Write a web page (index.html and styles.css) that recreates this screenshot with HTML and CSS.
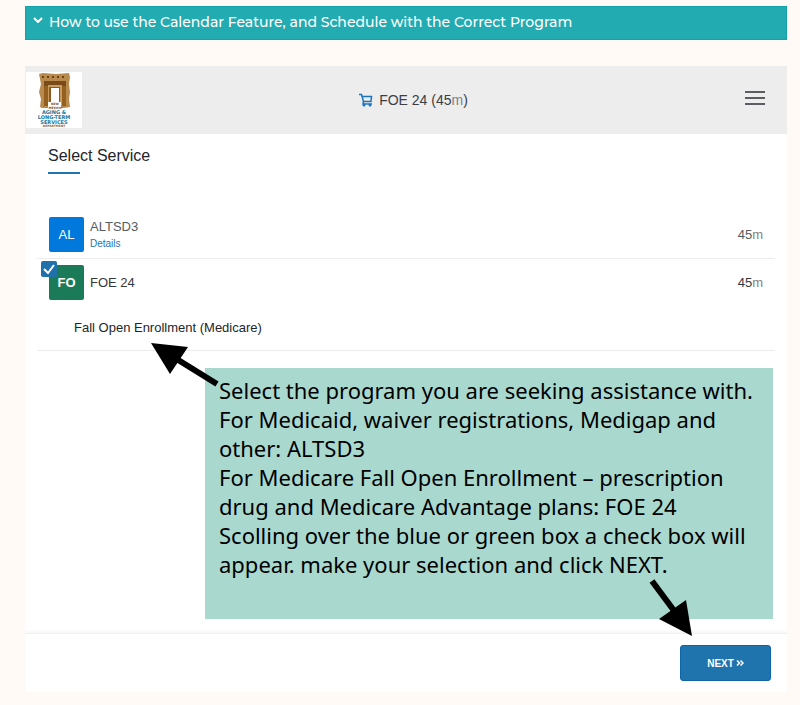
FILE: index.html
```html
<!DOCTYPE html>
<html lang="en">
<head>
    <meta charset="utf-8">
    <title>Select Service</title>
    <link rel="stylesheet" href="styles.css">
</head>
<body>
    <button class="accordion" type="button">
        <svg class="chevron" viewBox="0 0 10 6" aria-hidden="true"><path d="M1 1l4 4 4-4"/></svg>
        How to use the Calendar Feature, and Schedule with the Correct Program
    </button>

    <div class="booking">
        <header class="booking-header">
            <svg class="logo" viewBox="0 0 56 56" role="img" aria-label="New Mexico Aging and Long-Term Services Department">
                <rect width="56" height="56" fill="#fff"/>
                <path d="M13 2L17 1L30 2L43 1L44 5L43 12L44 20L43 27L44 35L38 36H16L14 35L15 27L13 20L15 12Z" fill="#b98a4e"/>
                <path d="M16 5H41" stroke="#6b4015" stroke-width="2" stroke-dasharray="2 3"/>
                <path d="M18 9H40V14H18Z" fill="#7a4a18"/>
                <path d="M18 14H22V34H18ZM36 14H40V34H36Z" fill="#94601f"/>
                <path d="M22 13H36V34H22Z" fill="#c99c62"/>
                <path d="M23 15H34V34H23Z" fill="#8c5a20"/>
                <path d="M25 16H33V34H25Z" fill="#fff"/>
                <path d="M22 30H35V37H22Z" fill="#fff"/>
                <text class="logo-state" x="29" y="33">NEW</text>
                <text class="logo-state" x="29" y="37">MEXICO</text>
                <text class="logo-name" x="28" y="42">AGING &amp;</text>
                <text class="logo-name" x="28" y="47">LONG-TERM</text>
                <text class="logo-name" x="28" y="52">SERVICES</text>
                <text class="logo-dept" x="28" y="55">DEPARTMENT</text>
            </svg>
            <div class="cart">
                <svg class="cart-icon" viewBox="0 0 14 14" aria-hidden="true">
                    <path d="M0 1.5h2.5L4.5 8.5h7.5L12.5 3.5H3"/>
                    <path d="M4.5 8.5L4 11h9"/>
                    <circle cx="5" cy="12.2" r="1"/>
                    <circle cx="11" cy="12.2" r="1"/>
                </svg>
                <span>FOE 24 (45<span class="unit">m</span>)</span>
            </div>
            <button class="menu" type="button" aria-label="Menu">
                <span></span><span></span><span></span>
            </button>
        </header>

        <main class="booking-body">
            <h1 class="title">Select Service</h1>

            <ul class="services">
                <li class="service">
                    <div class="service-row">
                        <span class="tile tile-blue">AL</span>
                        <div class="service-info">
                            <span class="service-name">ALTSD3</span>
                            <a class="details" href="#">Details</a>
                        </div>
                        <span class="duration">45<span class="unit">m</span></span>
                    </div>
                </li>
                <li class="service selected">
                    <div class="service-row">
                        <span class="tile tile-green">FO
                            <input class="check" type="checkbox" id="foe24" checked>
                        </span>
                        <label class="service-info service-name" for="foe24">FOE 24</label>
                        <span class="duration">45<span class="unit">m</span></span>
                    </div>
                    <p class="description">Fall Open Enrollment (Medicare)</p>
                </li>
            </ul>

            <div class="callout">
                <p>Select the program you are seeking assistance with.<br>
                For Medicaid, waiver registrations, Medigap and<br>
                other: ALTSD3<br>
                For Medicare Fall Open Enrollment – prescription<br>
                drug and Medicare Advantage plans: FOE 24<br>
                Scolling over the blue or green box a check box will<br>
                appear. make your selection and click NEXT.</p>
                <svg class="arrow arrow-service" viewBox="0 0 70 46" aria-hidden="true">
                    <path d="M24 15L66 41" stroke="#000" stroke-width="6"/>
                    <path d="M0 0L37 4L19 31Z"/>
                </svg>
                <svg class="arrow arrow-next" viewBox="0 0 44 58" aria-hidden="true">
                    <path d="M3 2L26 33" stroke="#000" stroke-width="6"/>
                    <path d="M43 57L37 21L10 40Z"/>
                </svg>
            </div>
        </main>

        <footer class="booking-footer">
            <button class="next" type="button">NEXT
                <svg class="next-icon" viewBox="0 0 8 6" aria-hidden="true"><path d="M1 0.5L3.5 3L1 5.5M4.5 0.5L7 3L4.5 5.5"/></svg>
            </button>
        </footer>
    </div>
</body>
</html>
```
FILE: styles.css
```css
* {
    box-sizing: border-box;
}
body {
    margin: 0;
    padding: 6px 13px 13px 25px;
    background-color: #fffaf6;
    color: #22262a;
    font-family: "Liberation Sans", Arial, sans-serif;
    font-size: 14px;
}
button {
    font-family: inherit;
    cursor: pointer;
}

/* accordion bar */
.accordion {
    display: flex;
    align-items: center;
    gap: 6px;
    width: 100%;
    height: 34px;
    padding: 0 7px 2px;
    background-color: #22abb1;
    border: 1px solid #12a3a9;
    color: white;
    font-family: Montserrat, Inter, sans-serif;
    font-size: 14px;
    font-weight: 500;
    text-align: left;
}
.chevron {
    width: 10px;
    height: 6px;
    margin-bottom: 4px;
    fill: none;
    stroke: white;
    stroke-width: 2;
}

/* booking widget */
.booking {
    margin-top: 26px;
    background-color: white;
}
.booking-header {
    display: flex;
    align-items: center;
    justify-content: space-between;
    height: 68px;
    padding: 0 22px 0 1px;
    background-color: #ededed;
}
.logo {
    width: 56px;
    height: 56px;
}
.logo text {
    font-family: "DejaVu Sans", sans-serif;
    font-weight: bold;
    text-anchor: middle;
}
.logo-state {
    font-size: 3px;
    fill: #7a4a18;
}
.logo-name {
    font-size: 5px;
    fill: #16789a;
}
.logo-dept {
    font-size: 3px;
    fill: #94601f;
}
.cart {
    display: flex;
    align-items: center;
    gap: 6px;
    color: #3a3f45;
}
.cart-icon {
    width: 14px;
    height: 14px;
    fill: #1b75bc;
    stroke: #1b75bc;
}
.cart-icon path {
    fill: none;
    stroke-width: 1.5;
}
.unit {
    color: #7d8287;
    font-weight: normal;
}
.menu {
    display: flex;
    flex-direction: column;
    gap: 4px;
    width: 20px;
    padding: 0 0 4px;
    background: none;
    border: none;
}
.menu span {
    height: 2px;
    background-color: #5a5d61;
}

.booking-body {
    padding: 12px 12px 14px;
}
.title {
    margin: 0 0 37px 11px;
    font-size: 16px;
    font-weight: normal;
    line-height: 20px;
}
.title::after {
    content: "";
    display: block;
    width: 32px;
    height: 2px;
    margin-top: 6px;
    background-color: #1f75b0;
}
.services {
    margin: 0;
    padding: 0;
    list-style: none;
}
.service {
    padding: 6px 12px;
    border-bottom: 1px solid #ececec;
}
.service-row {
    display: flex;
    align-items: center;
    gap: 6px;
}
.tile {
    display: flex;
    align-items: center;
    justify-content: center;
    position: relative;
    width: 35px;
    height: 35px;
    border-radius: 2px;
    color: white;
    font-size: 13px;
}
.tile-blue {
    background-color: #0078dc;
}
.tile-green {
    background-color: #1b7a57;
    font-weight: bold;
}
.service-info {
    flex: 1;
}
.service-name {
    display: block;
    color: #555b61;
    font-size: 13px;
}
.details {
    display: block;
    margin-top: 4px;
    color: #1f75b0;
    font-size: 10px;
    line-height: 12px;
    text-decoration: none;
}
.duration {
    color: #555b61;
    font-size: 13px;
}
.selected .service-name,
.selected .duration {
    color: #33383e;
}
.check {
    position: absolute;
    top: -4px;
    left: -8px;
    width: 16px;
    height: 16px;
    margin: 0;
    appearance: none;
    border-radius: 2px;
    background: #1f70ab url("data:image/svg+xml,%3Csvg xmlns='http://www.w3.org/2000/svg' viewBox='0 0 16 16'%3E%3Cpath d='M3 8l4 4 6-8' fill='none' stroke='white' stroke-width='2'/%3E%3C/svg%3E");
}
.description {
    margin: 19px 25px 7px;
    font-size: 13px;
    line-height: 18px;
}

/* instructions over the widget */
.callout {
    position: relative;
    margin: 17px 2px 0 168px;
    padding: 8px 14px 40px;
    background-color: #a9d8cf;
    color: black;
    font-family: "Noto Sans", sans-serif;
    font-size: 22px;
    line-height: 29px;
    white-space: nowrap;
}
.callout p {
    margin: 0;
}
.arrow {
    position: absolute;
}
.arrow-service {
    top: -25px;
    left: -54px;
    width: 70px;
    height: 46px;
}
.arrow-next {
    right: 80px;
    bottom: -18px;
    width: 44px;
    height: 58px;
}

.booking-footer {
    display: flex;
    justify-content: flex-end;
    padding: 11px 16px;
    border-top: 1px solid #f1f1f1;
    box-shadow: 0 -2px 2px #f8f8f8;
}
.next {
    display: flex;
    align-items: center;
    justify-content: center;
    gap: 2px;
    width: 91px;
    height: 36px;
    background-color: #1f74ae;
    border: 1px solid #0e66a6;
    border-radius: 3px;
    color: white;
    font-size: 10px;
    font-weight: bold;
}
.next-icon {
    width: 8px;
    height: 6px;
    fill: none;
    stroke: white;
    stroke-width: 1.5;
}
```
